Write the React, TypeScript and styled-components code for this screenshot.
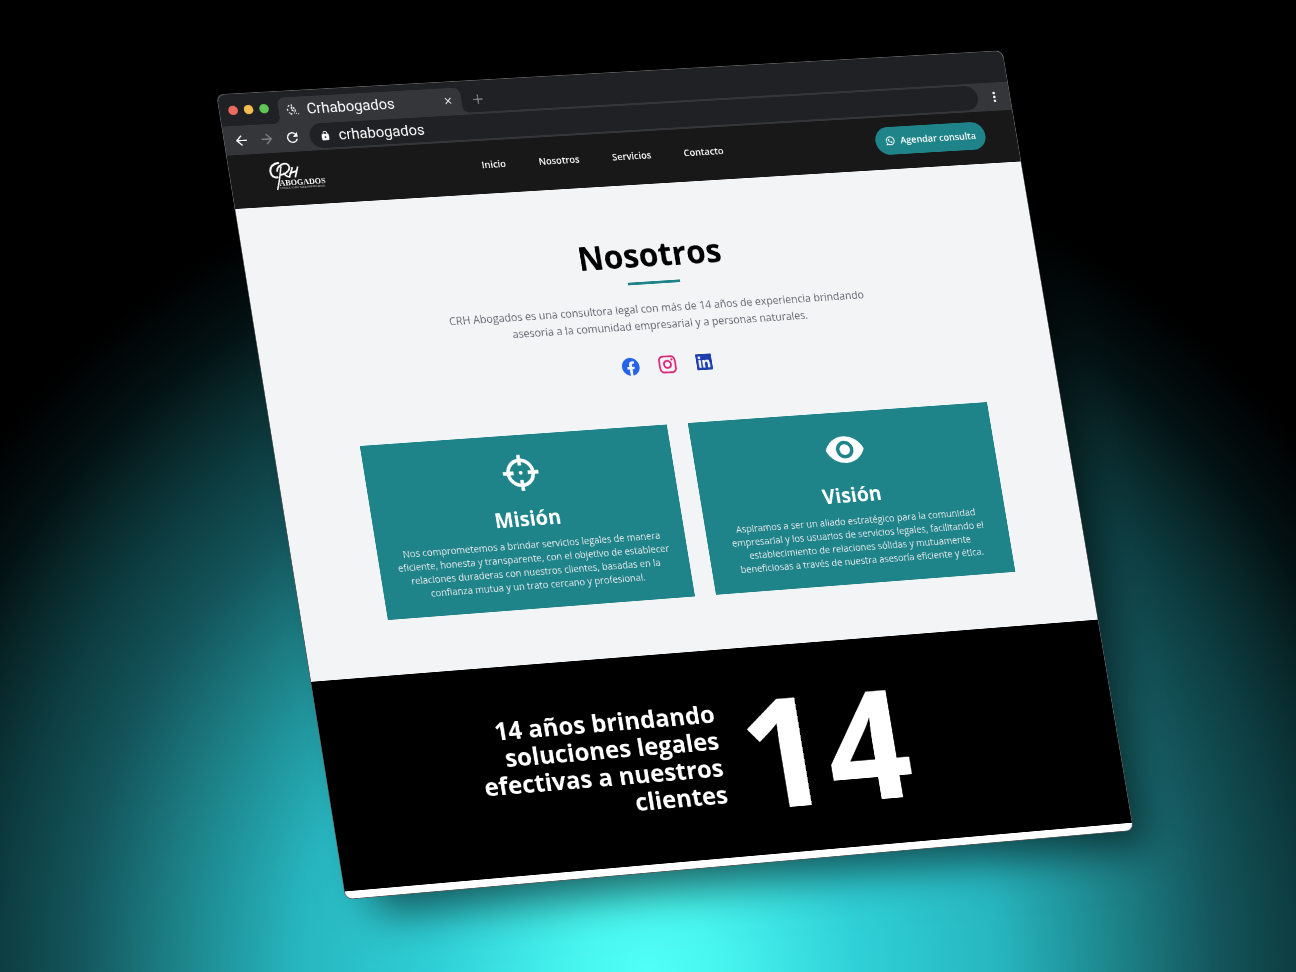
import React from "react";
import styled, { createGlobalStyle } from "styled-components";
import { BiLogoFacebookCircle, BiLogoLinkedinSquare } from "react-icons/bi";
import { RiInstagramLine, RiWhatsappLine } from "react-icons/ri";
import {
  MdArrowBack,
  MdArrowForward,
  MdClose,
  MdLock,
  MdMoreVert,
  MdRefresh,
  MdRemoveRedEye,
} from "react-icons/md";

type Point = [number, number];

const WINDOW_WIDTH = 1200;
const WINDOW_HEIGHT = 1184;

/* Window corners on the stage, measured from its centre:
   top left, top right, bottom right, bottom left. */
const CORNERS: [Point, Point, Point, Point] = [
  [-431, -391],
  [354, -435],
  [485, 344],
  [-302, 413],
];

/* Projects a w x h rectangle onto the given four corners. */
function perspectiveMatrix(w: number, h: number, corners: [Point, Point, Point, Point]) {
  const [[x0, y0], [x1, y1], [x2, y2], [x3, y3]] = corners;
  const dx1 = x1 - x2;
  const dx2 = x3 - x2;
  const sx = x0 - x1 + x2 - x3;
  const dy1 = y1 - y2;
  const dy2 = y3 - y2;
  const sy = y0 - y1 + y2 - y3;
  const det = dx1 * dy2 - dx2 * dy1;
  const g = (sx * dy2 - dx2 * sy) / det;
  const k = (dx1 * sy - sx * dy1) / det;
  const m = [
    (x1 - x0 + g * x1) / w, (y1 - y0 + g * y1) / w, 0, g / w,
    (x3 - x0 + k * x3) / h, (y3 - y0 + k * y3) / h, 0, k / h,
    0, 0, 1, 0,
    x0, y0, 0, 1,
  ];
  return `matrix3d(${m.map((n) => n.toFixed(9)).join(",")})`;
}

const GlobalStyle = createGlobalStyle`
  *, *::before, *::after { box-sizing: border-box; }
  body { margin: 0; background: #000; }
  h1, h2, p { margin: 0; }
  button { border: 0; padding: 0; background: none; color: inherit; font: inherit; }
  a { color: inherit; text-decoration: none; }
`;

const Stage = styled.div`
  position: relative;
  min-height: 100vh;
  overflow: hidden;
  font-family: "Open Sans", "Noto Sans", sans-serif;
  background: radial-gradient(
    circle farthest-corner at 50% 100%,
    #50fff8 0%,
    #48f6f0 6%,
    #2fd0d7 18%,
    #27b6c0 30%,
    #1c7f85 41%,
    #13545a 49%,
    #0d3f43 55%,
    #092a2c 60%,
    #031214 65%,
    #000 72%
  );
`;

const BrowserWindow = styled.div`
  position: absolute;
  top: 50%;
  left: 50%;
  display: flex;
  flex-direction: column;
  width: ${WINDOW_WIDTH}px;
  min-height: ${WINDOW_HEIGHT}px;
  overflow: hidden;
  border-radius: 10px;
  background: #fff;
  box-shadow: 0 0 0 1px #5c5c5c, 30px 36px 60px -12px rgba(0, 0, 0, 0.6);
  transform-origin: 0 0;
  transform: ${perspectiveMatrix(WINDOW_WIDTH, WINDOW_HEIGHT, CORNERS)};
`;

const TabStrip = styled.div`
  display: flex;
  align-items: flex-end;
  height: 47px;
  padding-left: 13px;
  background: #202124;
  color: #fff;
  font-family: Roboto, "Liberation Sans", sans-serif;
`;

const Lights = styled.div`
  display: flex;
  align-self: center;
  gap: 9px;
  width: 74px;
`;

const Light = styled.span<{ $color: string }>`
  width: 14px;
  height: 14px;
  border-radius: 50%;
  background: ${(p) => p.$color};
`;

const Tab = styled.div`
  position: relative;
  display: flex;
  align-items: center;
  gap: 12px;
  width: 274px;
  height: 38px;
  padding: 0 12px;
  border-radius: 10px 10px 0 0;
  background: #35363a;
  font-size: 22px;
  line-height: 24px;

  &::before,
  &::after {
    content: "";
    position: absolute;
    bottom: 0;
    width: 10px;
    height: 10px;
  }
  &::before {
    right: 100%;
    background: radial-gradient(circle at 0 0, #202124 10px, #35363a 10px);
  }
  &::after {
    left: 100%;
    background: radial-gradient(circle at 100% 0, #202124 10px, #35363a 10px);
  }
`;

const TabTitle = styled.span`
  flex: 1;
`;

const IconButton = styled.button<{ $color?: string }>`
  display: flex;
  align-items: center;
  justify-content: center;
  color: ${(p) => p.$color ?? "#fff"};
`;

const NewTabButton = styled(IconButton)`
  width: 50px;
  height: 38px;
`;

const Toolbar = styled.div`
  display: flex;
  align-items: center;
  gap: 14px;
  height: 43px;
  padding: 0 12px 0 13px;
  background: #35363a;
`;

const AddressBar = styled.label`
  display: flex;
  flex: 1;
  align-items: center;
  gap: 12px;
  height: 37px;
  padding: 0 15px;
  border-radius: 19px;
  background: #202124;
  color: #fff;
`;

const AddressInput = styled.input`
  flex: 1;
  min-width: 0;
  padding: 0;
  border: 0;
  outline: 0;
  background: transparent;
  color: #fff;
  font-family: Roboto, "Liberation Sans", sans-serif;
  font-size: 22px;
  line-height: 24px;
`;

const Header = styled.header`
  display: flex;
  align-items: center;
  justify-content: space-between;
  height: 79px;
  padding: 0 48px 8px 58px;
  background: #181818;
  color: #fff;
  font-size: 14px;
  font-weight: 600;
  line-height: 20px;
`;

const Nav = styled.nav`
  display: flex;
  gap: 50px;
`;

const ConsultButton = styled.button`
  display: flex;
  align-items: center;
  gap: 8px;
  height: 42px;
  padding: 0 15px;
  border-radius: 21px;
  background: #1e8489;
  color: #fff;
  font-weight: 600;
`;

const About = styled.section`
  display: flex;
  flex-direction: column;
  align-items: center;
  padding: 81px 0 81px 12px;
  background: #f3f4f6;
  text-align: center;
`;

const Title = styled.h1`
  padding-bottom: 16px;
  color: #000;
  font-size: 48px;
  font-weight: 700;
  line-height: 48px;
`;

const Underline = styled.span`
  width: 80px;
  height: 4px;
  background: #1e8489;
`;

const Lead = styled.p`
  max-width: 672px;
  margin-top: 24px;
  color: #64686f;
  font-size: 16px;
  line-height: 25px;
`;

const Socials = styled.div`
  display: flex;
  gap: 24px;
  margin-top: 31px;
`;

const SocialLink = styled.a<{ $color: string }>`
  display: flex;
  color: ${(p) => p.$color} !important;
`;

const Cards = styled.div`
  display: grid;
  grid-template-columns: 1fr 1fr;
  gap: 32px;
  width: 100%;
  max-width: 958px;
  margin-top: 73px;
`;

const Card = styled.article`
  display: flex;
  flex-direction: column;
  align-items: center;
  padding: 24px;
  background: #1e8489;
  color: #fff;
`;

const CardTitle = styled.h2`
  margin-top: 18px;
  font-size: 30px;
  font-weight: 700;
  line-height: 36px;
`;

const CardText = styled.p`
  margin-top: 11px;
  color: #e5e7eb;
  font-size: 14px;
  line-height: 20px;
`;

const Years = styled.section`
  display: grid;
  grid-template-columns: 1fr 1fr;
  gap: 32px;
  align-items: center;
  padding: 42px 0 41px 12px;
  background: #000;
  color: #fff;
`;

const YearsText = styled.p`
  justify-self: end;
  max-width: 384px;
  font-size: 36px;
  font-weight: 700;
  line-height: 40px;
  text-align: right;
`;

const YearsNumber = styled.strong`
  font-size: 224px;
  font-weight: 700;
  line-height: 224px;
`;

function Favicon() {
  return (
    <svg width="18" height="18" viewBox="0 0 18 18" fill="none" stroke="#fff" strokeWidth="1.6" aria-hidden="true">
      <path d="M5 2 2 4.500M1.500 7v4M3 13l2 1M8 1v10M6.500 6.500 10 4.500M8 9l3 3M5 16l2.500-1.500M11 5v3" strokeDasharray="3 0.8" />
      <path d="M12.500 8v4M10 14h1.500M13 14.500h1.500M16 15.500h1.500" />
    </svg>
  );
}

function Logo() {
  return (
    <svg width="82" height="44" viewBox="0 0 82 44" fill="none" stroke="#fff" strokeLinecap="round" role="img" aria-label="CRH Abogados">
      <path d="M16 1.500C9 1 3 6 2.500 13c-.4 6 3.500 10 9 9" strokeWidth="3" />
      <path d="M19 7c-2.500 9-5 21-10 33" strokeWidth="2.200" />
      <path d="M12.500 13c1-8 14-13.500 18-7.500 3 5.500-4 12.500-14 13.500" strokeWidth="2.600" />
      <path d="M22 17c1.500 3 3 5.500 7.500 5.500" strokeWidth="2.600" />
      <path d="M35.500 9c-2 5-4 9-6 13.500M43.500 9c-2 5-3.500 9-5.500 14M31 17.500c4-2 7-2.500 10.500-3" strokeWidth="2.400" />
      <text x="13" y="35" fill="#fff" stroke="none" fontFamily="'Liberation Serif', serif" fontWeight="700" fontSize="12">
        ABOGADOS
      </text>
      <text x="13" y="40" fill="#a3a3a3" stroke="none" fontFamily="'Open Sans', sans-serif" fontSize="4">
        CONSULTORÍA PARA EMPRESARIOS
      </text>
    </svg>
  );
}

function Crosshair() {
  return (
    <svg width="64" height="64" viewBox="0 0 24 24" fill="none" stroke="currentColor" strokeWidth="2" aria-hidden="true">
      <circle cx="12" cy="12" r="7" />
      <path d="M12 2v6M12 16v6M2 12h6M16 12h6" />
      <circle cx="12" cy="12" r="1" fill="currentColor" stroke="none" />
    </svg>
  );
}

export default function App() {
  return (
    <>
      <GlobalStyle />
      <Stage>
        <BrowserWindow>
          <TabStrip>
            <Lights>
              <Light $color="#ed6a5f" />
              <Light $color="#f6be50" />
              <Light $color="#61c555" />
            </Lights>
            <Tab>
              <Favicon />
              <TabTitle>Crhabogados</TabTitle>
              <IconButton type="button" aria-label="Cerrar pestaña">
                <MdClose size={16} />
              </IconButton>
            </Tab>
            <NewTabButton type="button" aria-label="Nueva pestaña" $color="#7a7b7d">
              <svg width="16" height="16" viewBox="0 0 16 16" stroke="currentColor" strokeWidth="2" aria-hidden="true">
                <path d="M8 1v14M1 8h14" />
              </svg>
            </NewTabButton>
          </TabStrip>
          <Toolbar>
            <IconButton type="button" aria-label="Atrás">
              <MdArrowBack size={24} />
            </IconButton>
            <IconButton type="button" aria-label="Adelante" $color="#7f8083">
              <MdArrowForward size={24} />
            </IconButton>
            <IconButton type="button" aria-label="Recargar">
              <MdRefresh size={24} />
            </IconButton>
            <AddressBar>
              <MdLock size={16} aria-hidden="true" />
              <AddressInput aria-label="Dirección" defaultValue="crhabogados" />
            </AddressBar>
            <IconButton type="button" aria-label="Menú">
              <MdMoreVert size={24} />
            </IconButton>
          </Toolbar>

          <Header>
            <Logo />
            <Nav>
              <a href="#inicio">Inicio</a>
              <a href="#nosotros">Nosotros</a>
              <a href="#servicios">Servicios</a>
              <a href="#contacto">Contacto</a>
            </Nav>
            <ConsultButton type="button">
              <RiWhatsappLine size={16} />
              Agendar consulta
            </ConsultButton>
          </Header>

          <About id="nosotros">
            <Title>Nosotros</Title>
            <Underline />
            <Lead>
              CRH Abogados es una consultora legal con más de 14 años de experiencia brindando
              asesoría a la comunidad empresarial y a personas naturales.
            </Lead>
            <Socials>
              <SocialLink href="#facebook" aria-label="Facebook" $color="#2563eb">
                <BiLogoFacebookCircle size={32} />
              </SocialLink>
              <SocialLink href="#instagram" aria-label="Instagram" $color="#db2777">
                <RiInstagramLine size={32} />
              </SocialLink>
              <SocialLink href="#linkedin" aria-label="LinkedIn" $color="#1e40af">
                <BiLogoLinkedinSquare size={32} />
              </SocialLink>
            </Socials>
            <Cards>
              <Card>
                <Crosshair />
                <CardTitle>Misión</CardTitle>
                <CardText>
                  Nos comprometemos a brindar servicios legales de manera eficiente, honesta y
                  transparente, con el objetivo de establecer relaciones duraderas con nuestros
                  clientes, basadas en la confianza mutua y un trato cercano y profesional.
                </CardText>
              </Card>
              <Card>
                <MdRemoveRedEye size={64} />
                <CardTitle>Visión</CardTitle>
                <CardText>
                  Aspiramos a ser un aliado estratégico para la comunidad empresarial y los
                  usuarios de servicios legales, facilitando el establecimiento de relaciones
                  sólidas y mutuamente beneficiosas a través de nuestra asesoría eficiente y
                  ética.
                </CardText>
              </Card>
            </Cards>
          </About>

          <Years>
            <YearsText>14 años brindando soluciones legales efectivas a nuestros clientes</YearsText>
            <YearsNumber>14</YearsNumber>
          </Years>
        </BrowserWindow>
      </Stage>
    </>
  );
}
